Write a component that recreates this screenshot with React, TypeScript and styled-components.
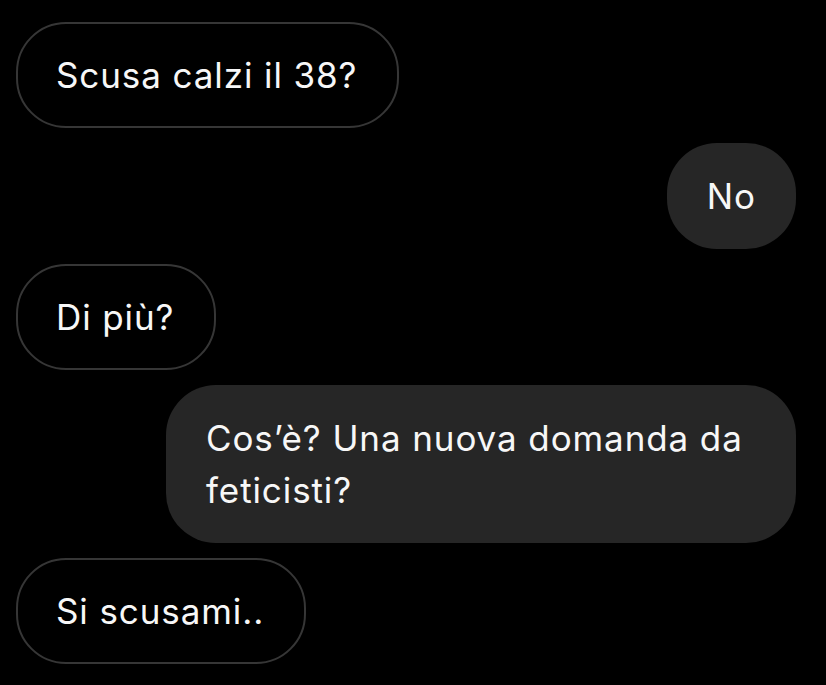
import React from "react";
import styled, { createGlobalStyle } from "styled-components";

const GlobalStyle = createGlobalStyle`
    html, body {
        margin: 0;
        padding: 0;
        background: #000;
    }
`;

const Thread = styled.div`
    display: flex;
    flex-direction: column;
    gap: 15px;
    padding: 22px 30px 0 16px;
    min-height: 685px;
    box-sizing: border-box;
    background: #000;
    font-family: Inter, "Liberation Sans", sans-serif;
`;

const Bubble = styled.div<{ $mine?: boolean }>`
    align-self: ${(p) => (p.$mine ? "flex-end" : "flex-start")};
    box-sizing: border-box;
    max-width: 630px;
    padding: ${(p) => (p.$mine ? "27px 40px" : "25px 40px 25px 38px")};
    border-radius: 50px;
    border: ${(p) => (p.$mine ? "none" : "2px solid #363636")};
    background: ${(p) => (p.$mine ? "#262626" : "#000")};
    color: #f7f7f7;
    font-size: 35px;
    line-height: 52px;
    letter-spacing: 0.9px;
`;

const messages = [
    { text: "Scusa calzi il 38?", mine: false },
    { text: "No", mine: true },
    { text: "Di più?", mine: false },
    { text: "Cos’è? Una nuova domanda da feticisti?", mine: true },
    { text: "Si scusami..", mine: false },
];

const App: React.FC = () => {
    return (
        <>
            <GlobalStyle />
            <Thread>
                {messages.map((m, i) => (
                    <Bubble key={i} $mine={m.mine}>
                        {m.text}
                    </Bubble>
                ))}
            </Thread>
        </>
    );
};

export default App;
